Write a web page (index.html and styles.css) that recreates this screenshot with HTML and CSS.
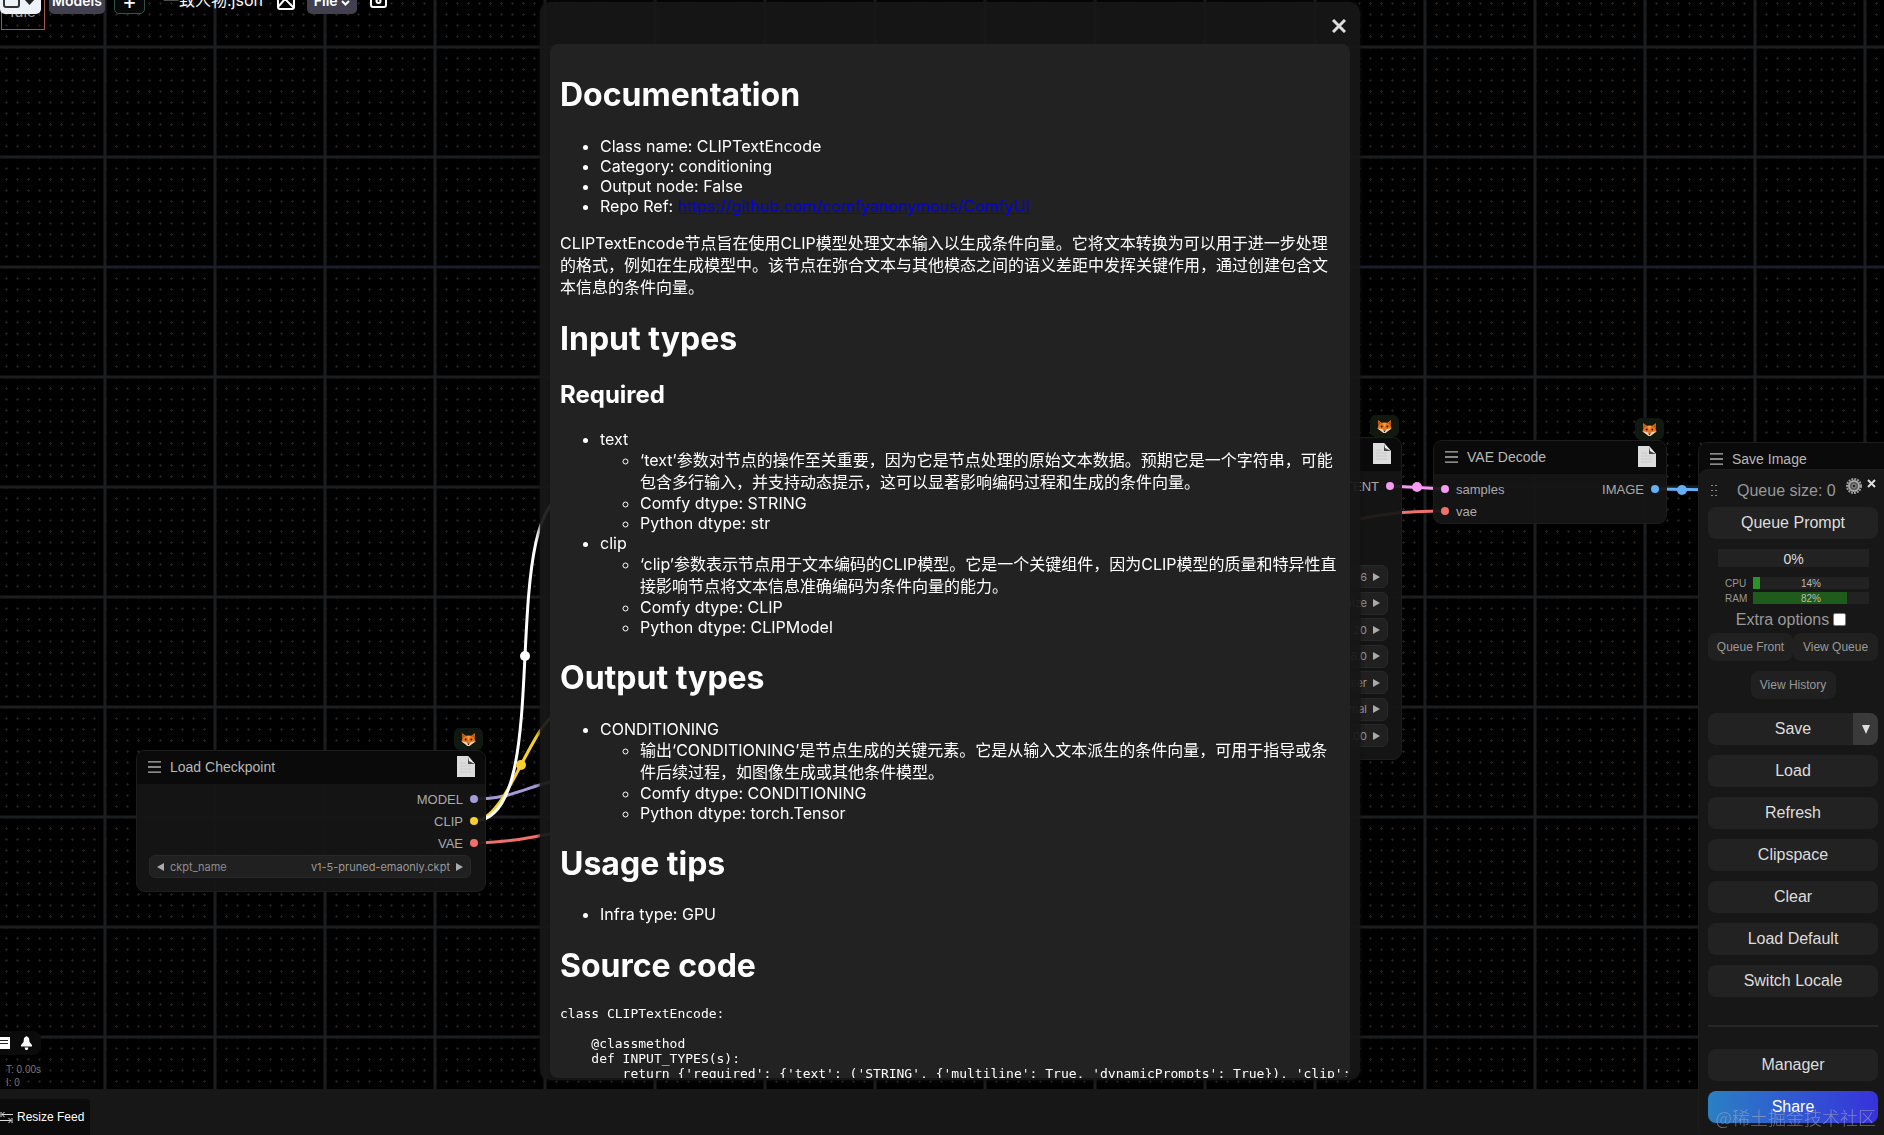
FILE: index.html
```html
<!DOCTYPE html>
<html lang="zh-CN">
<head>
  <meta charset="UTF-8" />
  <meta name="viewport" content="width=device-width, initial-scale=1.0" />
  <title>ComfyUI</title>
  <link rel="stylesheet" href="styles.css">
</head>
<body>

  <!-- shared icons -->
  <svg class="sprite" aria-hidden="true">
    <symbol id="fox" viewBox="0 0 16 16">
      <path d="M1 1 L5 4 H11 L15 1 L14.500 7 L15.500 10 L12 12.500 L9 15 H7 L4 12.500 L.5 10 L1.500 7Z" fill="#e8731c"/>
      <path d="M2 2.500 L4 4.500 L2.500 6Z M14 2.500 L12 4.500 L13.500 6Z" fill="#a8481a"/>
      <path d="M.5 10 L4 10.500 L8 12 L12 10.500 L15.500 10 L12 12.500 L9 15 H7 L4 12.500Z" fill="#f4dcb4"/>
      <path d="M6 4 L8 9 L10 4Z" fill="#f9a03f"/>
      <circle cx="5" cy="8" r="1" fill="#221510"/>
      <circle cx="11" cy="8" r="1" fill="#221510"/>
      <path d="M6.500 12.200 H9.500 L8 14Z" fill="#221510"/>
    </symbol>
    <symbol id="doc" viewBox="0 0 18 21">
      <path d="M0 0 H11 L18 8 V21 H0Z" fill="#dcdcdc"/>
      <path d="M11 0 L18 8 H11Z" fill="#444"/>
      <path d="M11 0 L18 8 L12 5Z" fill="#f4f4f4"/>
      <path d="M3 7 H9 M3 10 H14 M3 13 H14 M3 16 H14" stroke="#cacaca" fill="none"/>
    </symbol>
    <symbol id="bars" viewBox="0 0 14 14">
      <path d="M0 1.500 H14 M0 7 H14 M0 12.500 H14" stroke="#b4b4b4" stroke-width="1.500" fill="none"/>
    </symbol>
  </svg>

  <main class="canvas">
    <svg class="links">
      <defs>
        <pattern id="grid" x="105" y="47" width="110" height="110" patternUnits="userSpaceOnUse">
          <path d="M0 0 H110 M0 110 H110 M0 0 V110 M110 0 V110" stroke="#1c1d1f" stroke-width="3"/>
        </pattern>
        <pattern id="dots" x="100" y="42" width="11" height="11" patternUnits="userSpaceOnUse">
          <path d="M5.500 4 V7 M4 5.500 H7" stroke="#1f1f1f" fill="none"/>
        </pattern>
      </defs>
      <rect width="100%" height="100%" fill="url(#dots)"/>
      <rect width="100%" height="100%" fill="url(#grid)"/>
      <path d="M105 267 H1884" stroke="#1c1d2c" stroke-width="2"/>
      <g fill="none" stroke-width="3">
        <path d="M474 799 C510 799 525 788 550 782" stroke="#a79ad6"/>
        <path d="M474 843 C510 843 530 837 550 834" stroke="#f0716c"/>
        <path d="M474 821 C510 821 532 709 568 709" stroke="#f7d02f"/>
        <path d="M474 821 C560 821 490 491 576 491" stroke="#fff"/>
        <path d="M1390 486 L1445 489" stroke="#f49aef"/>
        <path d="M1340 524 C1375 514 1405 511 1445 511" stroke="#f0716c"/>
        <path d="M1655 489 L1720 490" stroke="#64b0f8"/>
      </g>
      <circle cx="525" cy="656" r="5" fill="#fff"/>
      <circle cx="521" cy="765" r="5" fill="#f7d02f"/>
      <circle cx="1417" cy="487" r="5" fill="#f49aef"/>
      <circle cx="1682" cy="490" r="5" fill="#64b0f8"/>
    </svg>

    <section class="node node-checkpoint">
      <span class="node-badge"><svg><use href="#fox"/></svg></span>
      <header class="node-title"><svg class="bars"><use href="#bars"/></svg>Load Checkpoint<svg class="doc"><use href="#doc"/></svg></header>
      <div class="slot"><span class="out">MODEL</span><i class="dot model"></i></div>
      <div class="slot"><span class="out">CLIP</span><i class="dot clip"></i></div>
      <div class="slot"><span class="out">VAE</span><i class="dot vae"></i></div>
      <button class="widget"><i class="arrow left"></i>ckpt_name<span class="value">v1-5-pruned-emaonly.ckpt</span><i class="arrow"></i></button>
    </section>

    <section class="node node-sampler">
      <span class="node-badge"><svg><use href="#fox"/></svg></span>
      <header class="node-title"><svg class="doc"><use href="#doc"/></svg></header>
      <div class="slot"><span class="out">LATENT</span><i class="dot latent"></i></div>
      <div class="widgets">
        <button class="widget"><span class="value">6</span><i class="arrow"></i></button>
        <button class="widget"><span class="value">randomize</span><i class="arrow"></i></button>
        <button class="widget"><span class="value">20</span><i class="arrow"></i></button>
        <button class="widget"><span class="value">8.0</span><i class="arrow"></i></button>
        <button class="widget"><span class="value">euler</span><i class="arrow"></i></button>
        <button class="widget"><span class="value">normal</span><i class="arrow"></i></button>
        <button class="widget"><span class="value">1.00</span><i class="arrow"></i></button>
      </div>
    </section>

    <section class="node node-decode">
      <span class="node-badge"><svg><use href="#fox"/></svg></span>
      <header class="node-title"><svg class="bars"><use href="#bars"/></svg>VAE Decode<svg class="doc"><use href="#doc"/></svg></header>
      <div class="slot"><i class="dot latent"></i><span>samples</span><span class="out">IMAGE</span><i class="dot image"></i></div>
      <div class="slot"><i class="dot vae"></i><span>vae</span></div>
    </section>

    <section class="node node-save">
      <header class="node-title"><svg class="bars"><use href="#bars"/></svg>Save Image</header>
    </section>

    <div class="tray">
      <svg width="10" height="12" viewBox="0 0 10 12"><path d="M0 0 H10 V12 H0Z" fill="#fff"/><path d="M0 3.500 H8 M0 6.500 H8" stroke="#222"/></svg>
      <svg width="11" height="14" viewBox="0 0 11 14"><path d="M5.500 0 L8 2 L8.500 6 L11 9 V10.500 H0 V9 L2.500 6 L3 2Z M3.500 11.500 H7.500 L6.500 14 H4.500Z" fill="#fff"/></svg>
    </div>
    <div class="stats">T: 0.00s<br>I: 0</div>
  </main>

  <footer class="feed">
    <button class="resize-feed">
      <svg width="13" height="11" viewBox="0 0 13 11"><path d="M1 0 V5 M12 6 V11 M2 2.500 H13 M4.500 0 L2 2.500 L4.500 5 M0 8.500 H11 M8.500 6 L11 8.500 L8.500 11" stroke="#ddd" fill="none"/></svg>
      Resize Feed
    </button>
  </footer>

  <div class="idle">Idle</div>
  <nav class="toolbar">
    <button class="tool-menu" aria-label="Workspace">
      <svg width="41" height="27" viewBox="0 0 41 27"><rect x="4" y="5" width="15" height="15" rx="2" fill="none" stroke="#333" stroke-width="2"/><path d="M24 12 H35 L29.500 18Z" fill="#222"/></svg>
    </button>
    <button class="tool models">Models</button>
    <button class="tool add" aria-label="New">+</button>
    <span class="file-name">一致人物.json</span>
    <svg class="picture" width="18" height="20" viewBox="0 0 18 20"><rect x="1" y="1" width="16" height="18" rx="2" fill="none" stroke="#fff" stroke-width="2"/><path d="M1 17 L8 9 L17 18" fill="none" stroke="#fff" stroke-width="2"/><circle cx="12" cy="6" r="1.500" fill="#fff"/></svg>
    <button class="tool file">File <svg width="9" height="6" viewBox="0 0 9 6"><path d="M1 1 L4.500 4.500 L8 1" fill="none" stroke="#fff" stroke-width="2"/></svg></button>
    <svg class="disk" width="17" height="18" viewBox="0 0 17 18"><rect x="1" y="1" width="15" height="16" rx="2" fill="none" stroke="#fff" stroke-width="2"/><circle cx="8.500" cy="11" r="2" fill="none" stroke="#fff" stroke-width="2"/></svg>
  </nav>

  <aside class="menu">
    <div class="menu-head">
      <i class="grip"></i>
      <span class="queue-size">Queue size: 0</span>
      <button class="gear" aria-label="Settings">
        <svg width="16" height="16" viewBox="0 0 16 16"><circle cx="8" cy="8" r="7" fill="none" stroke="#999" stroke-width="2" stroke-dasharray="2 1"/><circle cx="8" cy="8" r="5" fill="#555" stroke="#aaa" stroke-width="2"/><circle cx="8" cy="8" r="2" fill="#222" stroke="#999"/></svg>
      </button>
      <button class="menu-close" aria-label="Close">
        <svg width="9" height="9" viewBox="0 0 9 9"><path d="M1 1 L8 8 M8 1 L1 8" stroke="#ddd" stroke-width="2"/></svg>
      </button>
    </div>
    <button class="btn">Queue Prompt</button>
    <div class="progress">0%</div>
    <div class="meters">
      <span>CPU</span><div class="meter"><i class="fill cpu" style="width:6%"></i><b>14%</b></div>
      <span>RAM</span><div class="meter"><i class="fill ram" style="width:81%"></i><b>82%</b></div>
    </div>
    <label class="extra">Extra options<input type="checkbox"></label>
    <div class="queue-row">
      <button>Queue Front</button>
      <button>View Queue</button>
    </div>
    <button class="history">View History</button>
    <div class="save-row">
      <button class="btn">Save</button>
      <button class="drop" aria-label="Save options"></button>
    </div>
    <button class="btn">Load</button>
    <button class="btn">Refresh</button>
    <button class="btn">Clipspace</button>
    <button class="btn">Clear</button>
    <button class="btn">Load Default</button>
    <button class="btn">Switch Locale</button>
    <hr>
    <button class="btn">Manager</button>
    <button class="btn share">Share</button>
  </aside>

  <div class="overlay">
    <div class="dialog" role="dialog" aria-label="Documentation">
      <div class="dialog-bar">
        <button class="dialog-close" aria-label="Close">
          <svg width="14" height="14" viewBox="0 0 14 14"><path d="M1 1 L13 13 M13 1 L1 13" stroke="#ddd" stroke-width="3"/></svg>
        </button>
      </div>
      <div class="doc-body">
        <h1>Documentation</h1>
        <ul>
          <li>Class name: CLIPTextEncode</li>
          <li>Category: conditioning</li>
          <li>Output node: False</li>
          <li>Repo Ref: <a href="#">https://github.com/comfyanonymous/ComfyUI</a></li>
        </ul>
        <p>CLIPTextEncode节点旨在使用CLIP模型处理文本输入以生成条件向量。它将文本转换为可以用于进一步处理的格式，例如在生成模型中。该节点在弥合文本与其他模态之间的语义差距中发挥关键作用，通过创建包含文本信息的条件向量。</p>
        <h1>Input types</h1>
        <h2>Required</h2>
        <ul>
          <li>text
            <ul>
              <li class="zh">‘text’参数对节点的操作至关重要，因为它是节点处理的原始文本数据。预期它是一个字符串，可能包含多行输入，并支持动态提示，这可以显著影响编码过程和生成的条件向量。</li>
              <li>Comfy dtype: STRING</li>
              <li>Python dtype: str</li>
            </ul>
          </li>
          <li>clip
            <ul>
              <li class="zh">‘clip’参数表示节点用于文本编码的CLIP模型。它是一个关键组件，因为CLIP模型的质量和特异性直接影响节点将文本信息准确编码为条件向量的能力。</li>
              <li>Comfy dtype: CLIP</li>
              <li>Python dtype: CLIPModel</li>
            </ul>
          </li>
        </ul>
        <h1>Output types</h1>
        <ul>
          <li>CONDITIONING
            <ul>
              <li class="zh">输出‘CONDITIONING’是节点生成的关键元素。它是从输入文本派生的条件向量，可用于指导或条件后续过程，如图像生成或其他条件模型。</li>
              <li>Comfy dtype: CONDITIONING</li>
              <li>Python dtype: torch.Tensor</li>
            </ul>
          </li>
        </ul>
        <h1>Usage tips</h1>
        <ul>
          <li>Infra type: GPU</li>
        </ul>
        <h1>Source code</h1>
<pre>class CLIPTextEncode:

    @classmethod
    def INPUT_TYPES(s):
        return {'required': {'text': ('STRING', {'multiline': True, 'dynamicPrompts': True}), 'clip': ('CLIP',)}}
</pre>
      </div>
    </div>
  </div>

  <div class="watermark">@稀土掘金技术社区</div>

</body>
</html>
```
FILE: styles.css
```css
* {
  box-sizing: border-box;
}

body {
  margin: 0;
  height: 100vh;
  display: flex;
  flex-direction: column;
  overflow: hidden;
  background: #000;
  color: #fff;
  font-family: "Liberation Sans", Arial, "Noto Sans CJK SC", sans-serif;
}

button {
  font-family: inherit;
  border: none;
  padding: 0;
  color: inherit;
  background: none;
  cursor: pointer;
}

svg {
  flex: none;
}

.sprite {
  position: absolute;
  width: 0;
  height: 0;
}

/* graph canvas */
.canvas {
  flex: 1;
  position: relative;
  overflow: hidden;
}

.links {
  position: absolute;
  width: 100%;
  height: 100%;
}

.node {
  position: absolute;
  background: rgba(21, 21, 21, 0.94);
  border: 1px solid #1d1d1d;
  border-radius: 9px;
  color: #aaa;
  font-size: 13px;
}

.node-checkpoint {
  left: 136px;
  top: 750px;
  width: 350px;
  height: 142px;
}

.node-sampler {
  left: 1140px;
  top: 437px;
  width: 262px;
  height: 323px;
}

.node-decode {
  left: 1433px;
  top: 440px;
  width: 234px;
  height: 84px;
}

.node-save {
  left: 1698px;
  top: 442px;
  width: 300px;
  height: 200px;
}

.node-badge {
  position: absolute;
  right: 2px;
  top: -23px;
  width: 29px;
  height: 22px;
  display: flex;
  align-items: center;
  justify-content: center;
  background: #10180f;
  border-radius: 6px;
}

.node-badge svg {
  width: 15px;
  height: 15px;
}

.node-title {
  height: 33px;
  display: flex;
  align-items: center;
  padding: 0 10px 2px 11px;
  margin-bottom: 4px;
  background: #0a0a0a;
  border-radius: 8px 8px 0 0;
  font-size: 14px;
  color: #b8b8b8;
}

.bars {
  width: 13px;
  height: 14px;
  margin-right: 9px;
}

.doc {
  width: 18px;
  height: 21px;
  margin-left: auto;
}

.slot {
  height: 22px;
  display: flex;
  align-items: center;
  gap: 7px;
  padding: 0 7px;
}

.out {
  margin-left: auto;
}

.dot {
  width: 8px;
  height: 8px;
  border-radius: 50%;
}

.model { background: #a79ad6; }
.clip { background: #f7d02f; }
.vae { background: #f0716c; }
.latent { background: #f49aef; }
.image { background: #64b0f8; }

.widget {
  width: 322px;
  height: 23px;
  display: flex;
  align-items: center;
  gap: 6px;
  margin: 1px 12px 0;
  padding: 0 7px;
  background: #202020;
  border: 1px solid #282828;
  border-radius: 6px;
  font-family: Inter, sans-serif;
  font-size: 11px;
  color: #8c8c8c;
}

.value {
  margin-left: auto;
  color: #999;
}

.widgets {
  height: 182px;
  margin: 68px 13px 0;
  display: flex;
  flex-direction: column;
  justify-content: space-between;
}

.widgets .widget {
  width: 100%;
  margin: 0;
}

.arrow {
  border: 4px solid transparent;
  border-left: 7px solid #aaa;
  border-right: none;
}

.arrow.left {
  border-left: none;
  border-right: 7px solid #aaa;
}

.tray {
  position: absolute;
  left: 0;
  bottom: 34px;
  width: 41px;
  height: 24px;
  display: flex;
  align-items: center;
  gap: 11px;
  background: #0b0b0b;
  border-radius: 0 8px 8px 0;
}

.stats {
  position: absolute;
  left: 6px;
  bottom: 0;
  font-size: 10px;
  line-height: 13px;
  color: #777;
}

/* bottom feed */
.feed {
  height: 46px;
  display: flex;
  align-items: flex-end;
  background: #171717;
}

.resize-feed {
  width: 90px;
  height: 36px;
  display: flex;
  align-items: center;
  gap: 4px;
  background: #0b0b0b;
  border-radius: 0 4px 0 0;
  font-size: 12px;
  white-space: nowrap;
}

/* top toolbar, half scrolled out of the window */
.idle {
  position: absolute;
  left: 1px;
  top: 0;
  width: 44px;
  height: 30px;
  padding-top: 3px;
  border: 1px solid #a4574c;
  border-top: none;
  font-size: 16px;
  line-height: 18px;
  text-align: center;
  color: #999;
}

.toolbar {
  position: absolute;
  left: 0;
  top: -13px;
  height: 27px;
  display: flex;
  align-items: center;
  font-family: Inter, "Noto Sans CJK SC", sans-serif;
  font-size: 16px;
}

.tool-menu {
  height: 27px;
  margin-right: 8px;
  background: #eef3fa;
  border-radius: 5px;
}

.tool {
  height: 27px;
  border-radius: 5px;
  background: #42404e;
  font-size: 14px;
  font-weight: 600;
}

.models {
  width: 56px;
  margin-right: 9px;
}

.add {
  width: 31px;
  margin-right: 18px;
  background: #050807;
  border: 1px solid #2f5346;
  font-size: 22px;
  font-weight: 400;
  line-height: 20px;
}

.file-name {
  line-height: 20px;
  margin-bottom: 2px;
}

.picture {
  margin: 0 12px 2px 14px;
}

.file {
  width: 50px;
  margin-right: 13px;
}

.disk {
  margin-bottom: 4px;
}

/* side menu */
.menu {
  position: absolute;
  right: 0;
  top: 469px;
  width: 186px;
  padding: 4px 6px 16px 9px;
  display: flex;
  flex-direction: column;
  gap: 10px;
  background: #171717;
  border: 1px solid #1c1c1c;
  border-right: none;
  border-radius: 10px 0 0 10px;
  color: #ddd;
}

.menu-head {
  display: flex;
  height: 24px;
  margin-bottom: -1px;
}

.grip {
  width: 9px;
  height: 14px;
  margin: 9px 18px 0 2px;
  background: radial-gradient(circle, #888 1px, transparent 1px) 0 0 / 4px 5px;
}

.queue-size {
  padding-top: 8px;
  white-space: nowrap;
  line-height: 18px;
  color: #999;
}

.gear {
  height: 16px;
  margin: 4px 5px 0 auto;
}

.menu-close {
  height: 9px;
  margin: 5px 2px 0 0;
}

.menu-close svg,
.gear svg {
  display: block;
}

.btn {
  height: 32px;
  background: #222;
  border-radius: 8px;
  font-size: 16px;
}

.progress {
  height: 18px;
  margin: 0 9px 0 10px;
  background: #222;
  font-size: 14px;
  line-height: 20px;
  text-align: center;
}

.meters {
  display: grid;
  grid-template-columns: 25px 1fr;
  gap: 2px 3px;
  margin: 0 9px 0 17px;
  font-size: 10px;
  line-height: 13px;
  color: #999;
}

.meter {
  position: relative;
  height: 12px;
  background: #222;
  text-align: center;
}

.meter b {
  position: relative;
  font-weight: 400;
  line-height: 14px;
  color: #bbb;
}

.fill {
  position: absolute;
  left: 0;
  top: 0;
  height: 12px;
}

.cpu { background: #2b912b; }
.ram { background: #1f5c1c; }

.extra {
  height: 18px;
  display: flex;
  align-items: center;
  justify-content: center;
  gap: 4px;
  margin: -4px 4px 0 0;
  color: #999;
}

.extra input {
  appearance: none;
  width: 13px;
  height: 13px;
  margin: 0 0 2px;
  background: #fff;
  border: 1px solid #777;
  border-radius: 2px;
}

.queue-row {
  display: flex;
  margin-top: -6px;
}

.queue-row button,
.history {
  flex: 1;
  height: 28px;
  background: #202020;
  border-radius: 8px;
  font-size: 12px;
  color: #999;
}

.history {
  flex: none;
  width: 85px;
  align-self: center;
}

.save-row {
  position: relative;
  display: flex;
  margin-top: 4px;
  border-radius: 8px;
  overflow: hidden;
}

.save-row .btn {
  flex: 1;
}

.drop {
  position: absolute;
  right: 0;
  width: 25px;
  height: 32px;
  background: #3a3a3a;
  display: flex;
  align-items: center;
  justify-content: center;
}

.drop::before {
  content: "";
  border: 4px solid transparent;
  border-top: 9px solid #ddd;
  border-bottom: none;
}

.menu hr {
  width: 100%;
  height: 2px;
  margin: 18px 0 12px;
  border: none;
  background: #272727;
}

.share {
  background: linear-gradient(90deg, #2a80c4, #3732dc);
  color: #fff;
}

/* documentation dialog */
.overlay {
  position: fixed;
  inset: 0;
  padding: 2px 0 0 16px;
  display: flex;
  justify-content: center;
  align-items: flex-start;
  pointer-events: none;
}

.dialog {
  width: 820px;
  max-width: 90vw;
  height: 95vh;
  display: flex;
  flex-direction: column;
  padding: 0 10px 2px;
  background: rgba(23, 23, 23, 0.93);
  border-radius: 10px;
  box-shadow: 0 0 4px #111;
  pointer-events: auto;
}

.dialog-bar {
  height: 42px;
  flex: none;
  display: flex;
  justify-content: flex-end;
  align-items: center;
  padding: 6px 4px 0 0;
}

.dialog-close svg {
  display: block;
}

.doc-body {
  flex: 1;
  min-height: 0;
  overflow: hidden;
  padding: 10px;
  background: #222;
  border-radius: 8px;
  font-family: Inter, "Noto Sans CJK SC", sans-serif;
  font-size: 16px;
  line-height: 20px;
}

.doc-body h1 {
  font-size: 32px;
  line-height: 39px;
}

.doc-body h2 {
  font-size: 24px;
  line-height: 29px;
}

.doc-body p,
.doc-body .zh {
  line-height: 22px;
}

.doc-body a {
  color: #0000ee;
}

.doc-body pre {
  font-family: "DejaVu Sans Mono", monospace;
  font-size: 13px;
  line-height: 15px;
}

.watermark {
  position: fixed;
  right: 8px;
  bottom: 5px;
  font-family: "Noto Sans CJK SC", sans-serif;
  font-size: 18px;
  font-weight: 300;
  line-height: 26px;
  color: rgba(170, 170, 190, 0.6);
}
```
